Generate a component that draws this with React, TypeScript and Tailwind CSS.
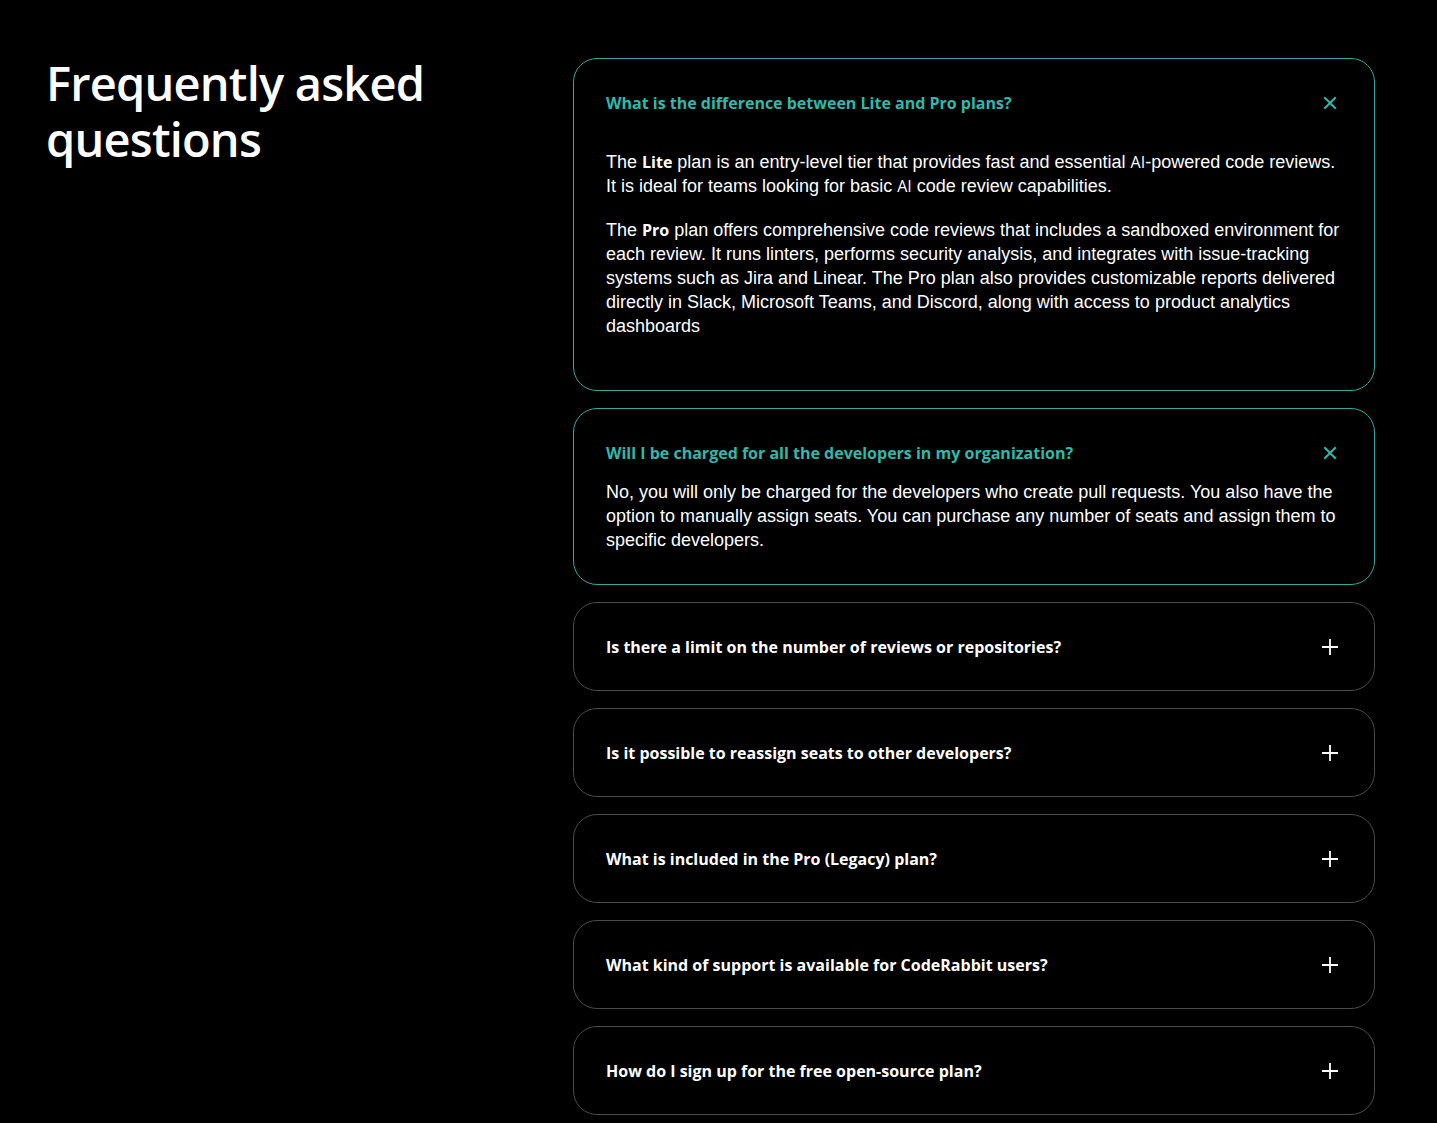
import React from "react";

const heading = '"Open Sans", "Noto Sans", sans-serif';
const body = '"Liberation Sans", Arial, sans-serif';

type Item = { q: string; open?: boolean; a?: React.ReactNode };

function Strong({ children }: { children: React.ReactNode }) {
  return (
    <span className="font-bold text-[16px]" style={{ fontFamily: heading }}>
      {children}
    </span>
  );
}

function Ai() {
  return (
    <span className="text-[16px]" style={{ fontFamily: heading }}>
      AI
    </span>
  );
}

const items: Item[] = [
  {
    q: "What is the difference between Lite and Pro plans?",
    open: true,
    a: (
      <div className="py-5">
        <p className="mb-5">
          The <Strong>Lite</Strong> plan is an entry-level tier that provides fast and essential <Ai />
          -powered code reviews. It is ideal for teams looking for basic <Ai /> code review capabilities.
        </p>
        <p>
          The <Strong>Pro</Strong> plan offers comprehensive code reviews that includes a sandboxed
          environment for each review. It runs linters, performs security analysis, and integrates
          with issue-tracking systems such as Jira and Linear. The Pro plan also provides
          customizable reports delivered directly in Slack, Microsoft Teams, and Discord, along with
          access to product analytics dashboards
        </p>
      </div>
    ),
  },
  {
    q: "Will I be charged for all the developers in my organization?",
    open: true,
    a: (
      <p>
        No, you will only be charged for the developers who create pull requests. You also have the
        option to manually assign seats. You can purchase any number of seats and assign them to
        specific developers.
      </p>
    ),
  },
  { q: "Is there a limit on the number of reviews or repositories?" },
  { q: "Is it possible to reassign seats to other developers?" },
  { q: "What is included in the Pro (Legacy) plan?" },
  { q: "What kind of support is available for CodeRabbit users?" },
  { q: "How do I sign up for the free open-source plan?" },
];

function CloseIcon() {
  return (
    <svg width="14" height="14" viewBox="0 0 14 14" fill="none">
      <path d="M2 2L12 12M12 2L2 12" stroke="#2fb8ac" strokeWidth="2" strokeLinecap="square" />
    </svg>
  );
}

function PlusIcon() {
  return (
    <svg width="18" height="18" viewBox="0 0 18 18" fill="none">
      <path d="M9 1V17M1 9H17" stroke="#ffffff" strokeWidth="1.8" />
    </svg>
  );
}

function FaqCard({ item }: { item: Item }) {
  return (
    <div
      className={
        "rounded-[24px] border px-8 py-8 " +
        (item.open ? "border-[#35a79d]" : "border-[#4a4a4a]")
      }
    >
      <div className="flex items-center justify-between h-[23px]">
        <span
          className={"text-[16px] font-bold " + (item.open ? "text-[#2fb8ac]" : "text-white")}
          style={{ fontFamily: heading }}
        >
          {item.q}
        </span>
        <span className="mr-[3px] flex items-center justify-center w-[18px] h-[18px]">
          {item.open ? <CloseIcon /> : <PlusIcon />}
        </span>
      </div>
      {item.open && (
        <div
          className="mt-4 text-[18px] leading-6 text-white"
          style={{ fontFamily: body }}
        >
          {item.a}
        </div>
      )}
    </div>
  );
}

export default function App() {
  return (
    <div className="min-h-[1123px] w-full bg-black text-white">
      <div className="flex pt-[58px] pl-[46px] pr-[62px]">
        <div className="w-[527px] shrink-0">
          <h2
            className="-mt-[3px] text-[47px] leading-[56px] font-semibold tracking-[-0.8px] text-white"
            style={{ fontFamily: heading }}
          >
            Frequently asked
            <br />
            questions
          </h2>
        </div>
        <div className="w-[802px] flex flex-col gap-[17px]">
          {items.map((it) => (
            <FaqCard key={it.q} item={it} />
          ))}
        </div>
      </div>
    </div>
  );
}
